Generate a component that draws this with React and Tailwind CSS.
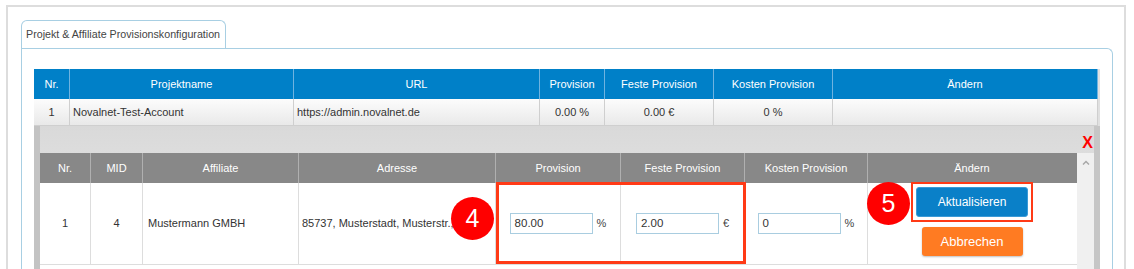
import React from "react";

const outerCols = [
  { w: "w-[36px]", h: "Nr.", v: "1", align: "center" },
  { w: "w-[224px]", h: "Projektname", v: "Novalnet-Test-Account", align: "left" },
  { w: "w-[246px]", h: "URL", v: "https://admin.novalnet.de", align: "left" },
  { w: "w-[65px]", h: "Provision", v: "0.00 %", align: "center" },
  { w: "w-[109px]", h: "Feste Provision", v: "0.00 €", align: "center" },
  { w: "w-[119px]", h: "Kosten Provision", v: "0 %", align: "center" },
  { w: "w-[265px]", h: "Ändern", v: "", align: "center" },
];

function Input({ value, unit }) {
  return (
    <div className="flex items-center gap-[4px]">
      <div className="w-[83px] h-[21px] border border-[#a9cde0] bg-white flex items-center pl-[4px] text-[11.5px] text-[#333]">
        {value}
      </div>
      <span className="text-[11px] text-[#444]">{unit}</span>
    </div>
  );
}

function Circle({ n, className }) {
  return (
    <div
      className={
        "absolute w-[43px] h-[43px] rounded-full bg-[#ff0000] text-white flex items-center justify-center text-[25px] leading-none " +
        className
      }
    >
      {n}
    </div>
  );
}

export default function App() {
  return (
    <div className="w-[1134px] h-[269px] overflow-hidden bg-white font-['Liberation_Sans',Arial,sans-serif] text-[#333]">
      <div className="ml-[6px] mt-[5px] w-[1120px] h-[300px] border-2 border-b-0 border-[#dddddd]">
        <div className="pl-[13px] pt-[13px] pr-[11px]">
          {/* Tab */}
          <div className="w-[205px] h-[28px] border border-b-0 border-[#a8cfe3] rounded-t-[6px] bg-white flex items-center pl-[4px] text-[10.7px] text-[#444] whitespace-nowrap">
            Projekt &amp; Affiliate Provisionskonfiguration
          </div>
          {/* Panel */}
          <div className="border-l border-t border-r border-[#a8cfe3] rounded-tr-[6px] pl-[12px] pr-[11px] pt-[20px] h-[240px]">
            <div className="w-[1066px]">
              {/* Outer header */}
              <div className="flex h-[30px]">
                {outerCols.map((c, i) => (
                  <div
                    key={i}
                    className={
                      c.w +
                      " bg-[#0080c8] text-white text-[11px] flex items-center justify-center border-r border-[#6fb3e0] last:border-r-0"
                    }
                  >
                    {c.h}
                  </div>
                ))}
                <div className="w-[2px] bg-[#e0e0e0]" />
              </div>
              {/* Outer row */}
              <div className="flex h-[27px]">
                {outerCols.map((c, i) => (
                  <div
                    key={i}
                    className={
                      c.w +
                      " bg-gradient-to-b from-[#fcfcfc] to-[#e9e9e9] border-b border-r border-[#cfcfcf] text-[11px] text-[#333] flex items-center whitespace-nowrap overflow-hidden " +
                      (c.align === "center" ? "justify-center" : "justify-start pl-[3px]")
                    }
                  >
                    {c.v}
                  </div>
                ))}
                <div className="w-[2px] bg-[#e0e0e0]" />
              </div>
              {/* Modal */}
              <div className="border-l-[6px] border-r-[6px] border-l-[#c3c3c3] border-r-[#c6c6c6] bg-gradient-to-b from-[#d9d9d9] to-[#ededed] h-[150px]">
                <div className="relative h-[27px]">
                  <span className="absolute right-[1px] top-[9px] text-[16px] leading-none font-bold text-[#ff0000]">
                    X
                  </span>
                </div>
                <div className="flex h-[130px]">
                  <div className="w-[1037px] bg-white">
                    <div className="flex h-[30px] bg-[#888888] text-white text-[11px]">
                      <div className="w-[51px] flex items-center justify-center border-r border-[#b0b0b0]">Nr.</div>
                      <div className="w-[52px] flex items-center justify-center border-r border-[#b0b0b0]">MID</div>
                      <div className="w-[156px] flex items-center justify-center border-r border-[#b0b0b0]">Affiliate</div>
                      <div className="w-[197px] flex items-center justify-center border-r border-[#b0b0b0]">Adresse</div>
                      <div className="w-[125px] flex items-center justify-center border-r border-[#b0b0b0]">Provision</div>
                      <div className="w-[124px] flex items-center justify-center border-r border-[#b0b0b0]">Feste Provision</div>
                      <div className="w-[123px] flex items-center justify-center border-r border-[#b0b0b0]">Kosten Provision</div>
                      <div className="w-[208px] flex items-center justify-center">Ändern</div>
                    </div>
                    <div className="relative flex h-[82px] border-b border-[#dddddd] text-[11px] text-[#333]">
                      <div className="w-[51px] flex items-center justify-center border-r border-[#dddddd]">1</div>
                      <div className="w-[52px] flex items-center justify-center border-r border-[#dddddd]">4</div>
                      <div className="w-[156px] flex items-center pl-[5px] border-r border-[#dddddd]">Mustermann GMBH</div>
                      <div className="w-[197px] flex items-center pl-[3px] border-r border-[#dddddd] whitespace-nowrap overflow-hidden">
                        85737, Musterstadt, Musterstr., 1
                      </div>
                      <div className="w-[125px] flex items-center justify-center border-r border-[#dddddd]">
                        <Input value="80.00" unit="%" />
                      </div>
                      <div className="w-[124px] flex items-center justify-center border-r border-[#dddddd]">
                        <Input value="2.00" unit="€" />
                      </div>
                      <div className="w-[123px] flex items-center justify-center border-r border-[#dddddd]">
                        <Input value="0" unit="%" />
                      </div>
                      <div className="w-[208px] flex flex-col items-center gap-[5px]">
                        <div className="border-2 border-[#ff3a16] p-[3px] -mt-[1px]">
                          <div className="w-[112px] h-[30px] rounded-[3px] bg-[#0a80c8] border border-[#3b9ad6] text-white text-[12px] flex items-center justify-center">
                            Aktualisieren
                          </div>
                        </div>
                        <div className="w-[101px] h-[29px] rounded-[3px] bg-[#ff7b22] shadow-[0_1px_2px_rgba(0,0,0,0.25)] text-white text-[13px] flex items-center justify-center">
                          Abbrechen
                        </div>
                      </div>
                      {/* Highlight box 4 */}
                      <div className="absolute left-[456px] top-[-1px] w-[250px] h-[82px] border-[3px] border-[#ff3a16] pointer-events-none" />
                      <Circle n="4" className="left-[411px] top-[14px]" />
                      <Circle n="5" className="left-[827px] top-[-1px]" />
                    </div>
                  </div>
                  <div className="w-[17px] ml-[0px] bg-[#f0f0f0] flex justify-center pt-[7px]">
                    <svg width="8" height="5" viewBox="0 0 8 5">
                      <path d="M1 4.5 L4 1.5 L7 4.5" fill="none" stroke="#a8a8a8" strokeWidth="1.5" />
                    </svg>
                  </div>
                </div>
              </div>
            </div>
          </div>
        </div>
      </div>
    </div>
  );
}
